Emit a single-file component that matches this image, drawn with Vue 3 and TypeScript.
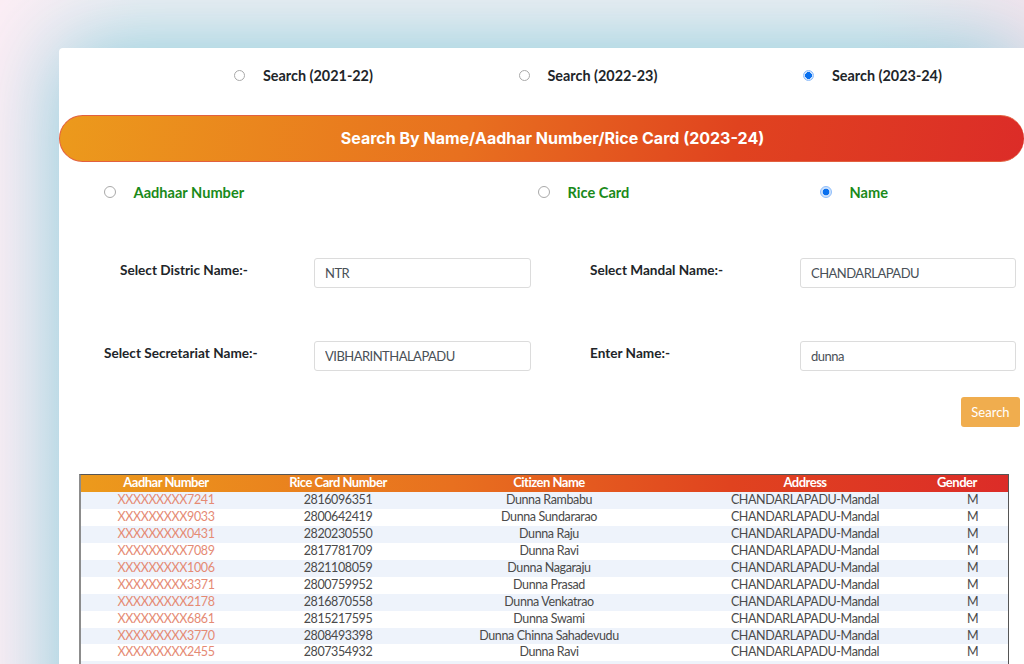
<script setup lang="ts">
interface Row { aadhar: string; rice: string; name: string }
const yearOptions = [
  { label: 'Search (2021-22)', checked: false },
  { label: 'Search (2022-23)', checked: false },
  { label: 'Search (2023-24)', checked: true },
]
const rows: Row[] = [
  { aadhar: 'XXXXXXXXX7241', rice: '2816096351', name: 'Dunna Rambabu' },
  { aadhar: 'XXXXXXXXX9033', rice: '2800642419', name: 'Dunna Sundararao' },
  { aadhar: 'XXXXXXXXX0431', rice: '2820230550', name: 'Dunna Raju' },
  { aadhar: 'XXXXXXXXX7089', rice: '2817781709', name: 'Dunna Ravi' },
  { aadhar: 'XXXXXXXXX1006', rice: '2821108059', name: 'Dunna Nagaraju' },
  { aadhar: 'XXXXXXXXX3371', rice: '2800759952', name: 'Dunna Prasad' },
  { aadhar: 'XXXXXXXXX2178', rice: '2816870558', name: 'Dunna Venkatrao' },
  { aadhar: 'XXXXXXXXX6861', rice: '2815217595', name: 'Dunna Swami' },
  { aadhar: 'XXXXXXXXX3770', rice: '2808493398', name: 'Dunna Chinna Sahadevudu' },
  { aadhar: 'XXXXXXXXX2455', rice: '2807354932', name: 'Dunna Ravi' },
]
</script>

<template>
  <div class="page">
    <main class="card">
      <div class="years">
        <label v-for="y in yearOptions" :key="y.label" class="year">
          <input type="radio" name="year" :checked="y.checked" />
          <span>{{ y.label }}</span>
        </label>
      </div>

      <h1 class="banner">Search By Name/Aadhar Number/Rice Card (2023-24)</h1>

      <div class="modes">
        <label class="mode m1"><input type="radio" name="mode" /><span>Aadhaar Number</span></label>
        <label class="mode m2"><input type="radio" name="mode" /><span>Rice Card</span></label>
        <label class="mode m3"><input type="radio" name="mode" checked /><span>Name</span></label>
      </div>

      <div class="form">
        <label class="flabel l1">Select Distric Name:-</label>
        <input class="field" value="NTR" />
        <label class="flabel l2">Select Mandal Name:-</label>
        <input class="field" value="CHANDARLAPADU" />
        <label class="flabel l3">Select Secretariat Name:-</label>
        <input class="field" value="VIBHARINTHALAPADU" />
        <label class="flabel l2">Enter Name:-</label>
        <input class="field" value="dunna" />
      </div>

      <div class="actions"><button class="search" type="button">Search</button></div>

      <table class="results">
        <colgroup>
          <col class="c1" /><col class="c2" /><col class="c3" /><col class="c4" /><col class="c5" />
        </colgroup>
        <thead>
          <tr>
            <th>Aadhar Number</th><th>Rice Card Number</th><th>Citizen Name</th><th>Address</th><th class="gender-h">Gender</th>
          </tr>
        </thead>
        <tbody>
          <tr v-for="r in rows" :key="r.aadhar">
            <td class="aadhar">{{ r.aadhar }}</td>
            <td>{{ r.rice }}</td>
            <td>{{ r.name }}</td>
            <td>CHANDARLAPADU-Mandal</td>
            <td>M</td>
          </tr>
          <tr><td colspan="5"></td></tr>
        </tbody>
      </table>
    </main>
  </div>
</template>

<style>
html, body { margin: 0; padding: 0; }
</style>

<style scoped>
.page {
  width: 1024px;
  height: 664px;
  overflow: hidden;
  box-sizing: border-box;
  padding: 48px 0 0 59px;
  background: linear-gradient(90deg, #fdeef5 0, #f0f0f4 14%, #f0f0f4 85%, #f6e6ee 100%);
  font-family: Lato, "Liberation Sans", sans-serif;
}
.card {
  width: 965px;
  min-height: 900px;
  background: #fff;
  border-radius: 4px 0 0 0;
  box-shadow: 0 0 88px rgba(105, 190, 210, 0.8);
}
input[type="radio"] {
  appearance: none;
  box-sizing: border-box;
  width: 11px;
  height: 11px;
  margin: 0;
  flex: none;
  border: 1px solid #a9a9a9;
  border-radius: 50%;
  background: #fff;
}
input[type="radio"]:checked {
  border: 1.5px solid #8dbdfb;
  background: radial-gradient(circle, #0a70ee 0 3.2px, #cfe2fb 3.6px);
}
.years {
  display: flex;
  height: 67px;
  padding-left: 175px;
  box-sizing: border-box;
  padding-top: 20px;
}
.year {
  display: flex;
  flex: none;
  align-items: center;
  gap: 18px;
  width: 284.5px;
  height: 14px;
  font-size: 14.4px;
  font-weight: 700;
  line-height: 13px;
  color: #212529;
}
.banner {
  margin: 0;
  height: 47px;
  box-sizing: border-box;
  padding: 0 0 1px 21px;
  display: flex;
  align-items: center;
  justify-content: center;
  border: 1px solid #e2603f;
  border-right: 0;
  border-radius: 24px;
  background: linear-gradient(100deg, #ec9a1c 0%, #e8701f 42%, #e0431f 70%, #dc2c28 100%);
  color: #fff;
  font-family: Inter, sans-serif;
  font-size: 16px;
  font-weight: 700;
}
.modes {
  display: flex;
  align-items: center;
  height: 14px;
  margin-top: 23px;
}
.mode {
  display: flex;
  align-items: center;
  gap: 17.5px;
  font-size: 14.6px;
  font-weight: 700;
  line-height: 13px;
  color: #1a8a1a;
}
.mode input[type="radio"] {
  width: 12px;
  height: 12px;
}
.m1 { margin-left: 45px; width: 434px; }
.m2 { width: 282px; }
.form {
  display: grid;
  grid-template-columns: 255px 217px 269px 216px;
  row-gap: 53px;
  margin-top: 59px;
  align-items: start;
}
.flabel {
  font-size: 13.6px;
  font-weight: 700;
  color: #212529;
  padding-top: 4px;
  line-height: 16px;
}
.l1 { padding-left: 61px; }
.l2 { padding-left: 59px; }
.l3 { padding-left: 45px; }
.field {
  box-sizing: border-box;
  width: 100%;
  height: 30px;
  padding: 0 10px 1px;
  border: 1px solid #dcdcdc;
  border-radius: 3px;
  outline: 0;
  font-family: Lato, sans-serif;
  font-size: 13px;
  letter-spacing: -0.52px;
  color: #495057;
  background: #fff;
}
.actions {
  display: flex;
  justify-content: flex-end;
  padding-right: 4px;
  margin-top: 26px;
}
.search {
  width: 59px;
  height: 30px;
  padding: 0;
  border: 0;
  border-radius: 3px;
  background: #f0ad4e;
  color: #fff;
  font-family: Lato, sans-serif;
  font-size: 13px;
}
.results {
  table-layout: fixed;
  width: 930px;
  margin: 47px 0 0 20px;
  border-collapse: separate;
  border-spacing: 0;
  border: 1px solid #555;
  border-left-width: 2px;
  border-left-color: #8c8c8c;
  border-bottom: 0;
  font-size: 12.5px;
  letter-spacing: -0.38px;
  color: #4a4a4a;
  text-align: center;
}
.c1 { width: 170px; }
.c2 { width: 174px; }
.c3 { width: 248px; }
.c4 { width: 264px; }
.results thead tr {
  background: linear-gradient(90deg, #ec9a1c 0%, #e8701f 40%, #e0431f 70%, #dc2c28 100%);
}
.results th {
  box-sizing: border-box;
  height: 17px;
  padding: 0 0 2px;
  color: #fff;
  font-size: 13px;
  font-weight: 700;
  line-height: 15px;
  letter-spacing: -0.5px;
}
.results th.gender-h { text-align: left; }
.results td {
  box-sizing: border-box;
  height: 17px;
  padding: 0 0 1px;
  line-height: 16px;
}
.results tbody tr:nth-child(odd) { background: #eef3fb; }
.results tbody tr:nth-child(9) td { height: 16px; padding: 0; }
.aadhar { color: #e58a74; }
</style>
